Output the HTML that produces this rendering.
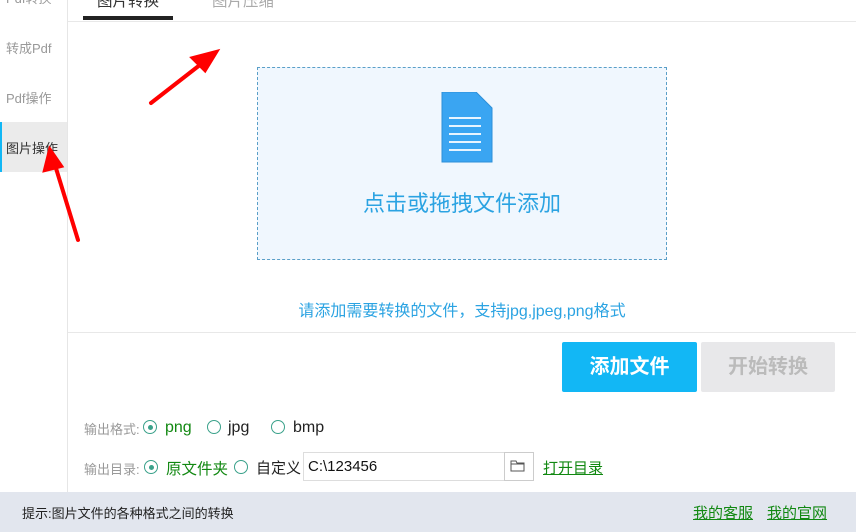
<!DOCTYPE html>
<html><head><meta charset="utf-8"><style>
*{margin:0;padding:0;box-sizing:border-box}
body{width:856px;height:532px;overflow:hidden;background:#fff;font-family:"Liberation Sans","Noto Sans CJK SC",sans-serif;position:relative}
.abs{position:absolute;white-space:nowrap}
.side{left:0;top:0;width:68px;height:492px;border-right:1px solid #e6e6e6;background:#fff}
.si{position:absolute;left:0;width:67px;font-size:13px;color:#999;padding-left:6px}
.radio{position:absolute;width:14px;height:14px;border:1px solid #3aa18a;border-radius:50%}
.radio.on:after{content:"";position:absolute;left:3.5px;top:3.5px;width:5px;height:5px;border-radius:50%;background:#3aa18a}
</style></head><body>
<div class="abs side">
<div class="si" style="top:-12px">Pdf转换</div>
<div class="si" style="top:38px">转成Pdf</div>
<div class="si" style="top:88px">Pdf操作</div>
<div class="abs" style="left:0;top:122px;width:67px;height:50px;background:#ebebeb;border-left:2px solid #12b7f5"></div>
<div class="si" style="top:138px;color:#333">图片操作</div>
</div>
<div class="abs" style="left:68px;top:21px;width:788px;height:1px;background:#e8e8e8"></div>
<div class="abs" style="left:97px;top:-11px;font-size:15.5px;color:#333">图片转换</div>
<div class="abs" style="left:212px;top:-11px;font-size:15.5px;color:#aaa">图片压缩</div>
<div class="abs" style="left:83px;top:16px;width:90px;height:4px;background:#222"></div>
<div class="abs" style="left:257px;top:67px;width:410px;height:193px;border:1px dashed #5a9fc8;background:#f0f7fe"></div>
<svg class="abs" style="left:440px;top:92px" width="53" height="71"><path d="M2 0H36L52 16V70H2Z" fill="#3aa5f2" stroke="#2d8fd8"/><g stroke="#e8f4ff" stroke-width="2"><path d="M9 26H41M9 34H41M9 42H41M9 50H41M9 58H41"/></g></svg>
<div class="abs" style="left:257px;top:186px;width:410px;text-align:center;font-size:22px;color:#2ba3e2">点击或拖拽文件添加</div>
<div class="abs" style="left:257px;top:297px;width:410px;text-align:center;font-size:16px;color:#2ba3e2">请添加需要转换的文件，支持jpg,jpeg,png格式</div>
<div class="abs" style="left:68px;top:332px;width:788px;height:1px;background:#e8e8e8"></div>
<div class="abs" style="left:562px;top:342px;width:135px;height:50px;background:#12b7f5;border-radius:2px;color:#fff;font-size:20px;font-weight:bold;text-align:center;line-height:50px">添加文件</div>
<div class="abs" style="left:701px;top:342px;width:134px;height:50px;background:#e8e8ea;border-radius:2px;color:#bbb;font-size:20px;font-weight:bold;text-align:center;line-height:50px">开始转换</div>
<div class="abs" style="left:84px;top:419px;font-size:13px;color:#999">输出格式:</div>
<span class="radio on" style="left:143px;top:420px"></span>
<div class="abs" style="left:165px;top:419px;font-size:16px;color:#118811">png</div>
<span class="radio" style="left:207px;top:420px"></span>
<div class="abs" style="left:228px;top:419px;font-size:16px;color:#222">jpg</div>
<span class="radio" style="left:271px;top:420px"></span>
<div class="abs" style="left:293px;top:419px;font-size:16px;color:#222">bmp</div>
<div class="abs" style="left:84px;top:459px;font-size:13px;color:#999">输出目录:</div>
<span class="radio on" style="left:144px;top:460px"></span>
<div class="abs" style="left:166px;top:457px;font-size:15.5px;color:#118811">原文件夹</div>
<span class="radio" style="left:234px;top:460px"></span>
<div class="abs" style="left:256px;top:457px;font-size:15px;color:#222">自定义</div>
<div class="abs" style="left:303px;top:452px;width:202px;height:29px;border:1px solid #ddd;font-size:15px;line-height:27px;padding-left:4px;color:#111">C:\123456</div>
<div class="abs" style="left:504px;top:452px;width:30px;height:29px;border:1px solid #ccc"></div>
<svg class="abs" style="left:510px;top:459px" width="16" height="14"><path d="M1 2H6L7 4H14V12H1Z M1 5H14" fill="none" stroke="#555"/></svg>
<div class="abs" style="left:543px;top:457px;font-size:15px;color:#118811;text-decoration:underline">打开目录</div>
<div class="abs" style="left:0;top:492px;width:856px;height:40px;background:#e2e6ee"></div>
<div class="abs" style="left:22px;top:503px;font-size:13px;color:#222">提示:图片文件的各种格式之间的转换</div>
<div class="abs" style="left:693px;top:502px;font-size:15px;color:#118811;text-decoration:underline">我的客服</div>
<div class="abs" style="left:767px;top:502px;font-size:15px;color:#118811;text-decoration:underline">我的官网</div>
<svg class="abs" style="left:0;top:0" width="856" height="532"><g stroke="#f00" stroke-width="4" fill="#f00" stroke-linecap="round"><path d="M151 103L205 61"/><path d="M216 52L193 58L205 70Z"/><path d="M78 240L55 165"/><path d="M50 150L45 170L61 166Z"/></g></svg>
</body></html>
